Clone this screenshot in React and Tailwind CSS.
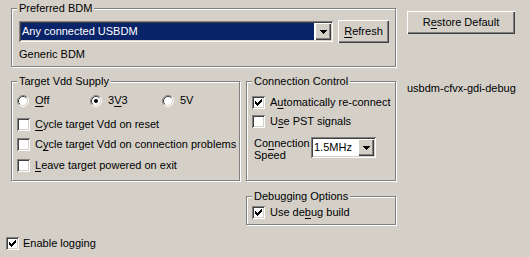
import React from "react";

const SUNKEN =
  "shadow-[inset_1px_1px_0_#808080,inset_-1px_-1px_0_#ffffff,inset_2px_2px_0_#404040,inset_-2px_-2px_0_#D4D0C8]";
const RAISED =
  "shadow-[inset_1px_1px_0_#ffffff,inset_-1px_-1px_0_#404040,inset_-2px_-2px_0_#808080]";

function U({ children }) {
  return <span className="underline underline-offset-[2px] decoration-1">{children}</span>;
}

function Group({ title, className, children }) {
  return (
    <div
      className={`relative border border-[#808080] shadow-[inset_1px_1px_0_#ffffff,1px_1px_0_#ffffff] ${className}`}
    >
      <span className="absolute left-[5px] top-[-7px] px-[2px] bg-[#D4D0C8] leading-[13px] whitespace-nowrap">
        {title}
      </span>
      {children}
    </div>
  );
}

function Check({ checked }) {
  const cols = [2, 3, 4, 3, 2, 1, 0];
  return (
    <span className={`relative block w-[13px] h-[13px] shrink-0 bg-white ${SUNKEN}`}>
      {checked && (
        <svg
          width="7"
          height="7"
          viewBox="0 0 7 7"
          className="absolute left-[3px] top-[3px]"
          shapeRendering="crispEdges"
        >
          {cols.map((y, x) => (
            <rect key={x} x={x} y={y} width="1" height="3" fill="#000" />
          ))}
        </svg>
      )}
    </span>
  );
}

function Radio({ checked }) {
  return (
    <svg width="12" height="12" viewBox="0 0 12 12" className="shrink-0 block">
      <circle cx="6" cy="6" r="5" fill="#fff" />
      <path d="M2.11 9.89 A5.5 5.5 0 0 1 9.89 2.11" fill="none" stroke="#808080" strokeWidth="1" />
      <path d="M9.89 2.11 A5.5 5.5 0 0 1 2.11 9.89" fill="none" stroke="#ffffff" strokeWidth="1" />
      <path d="M2.82 9.18 A4.5 4.5 0 0 1 9.18 2.82" fill="none" stroke="#404040" strokeWidth="1" />
      <path d="M9.18 2.82 A4.5 4.5 0 0 1 2.82 9.18" fill="none" stroke="#D4D0C8" strokeWidth="1" />
      {checked && <circle cx="6" cy="6" r="2" fill="#000" />}
    </svg>
  );
}

function Arrow() {
  return (
    <svg width="7" height="4" viewBox="0 0 7 4" shapeRendering="crispEdges" className="block">
      <rect x="0" y="0" width="7" height="1" fill="#000" />
      <rect x="1" y="1" width="5" height="1" fill="#000" />
      <rect x="2" y="2" width="3" height="1" fill="#000" />
      <rect x="3" y="3" width="1" height="1" fill="#000" />
    </svg>
  );
}

function DropBtn() {
  return (
    <div className={`w-[16px] h-full shrink-0 bg-[#D4D0C8] flex items-center justify-center ${RAISED}`}>
      <Arrow />
    </div>
  );
}

function Btn({ className, children }) {
  return (
    <div className={`flex items-center justify-center bg-[#D4D0C8] shrink-0 ${RAISED} ${className}`}>
      <span className="leading-[13px]">{children}</span>
    </div>
  );
}

function CheckRow({ checked, className = "", children }) {
  return (
    <div className={`flex items-center gap-[5px] h-[13px] ${className}`}>
      <Check checked={checked} />
      <span className="leading-[13px] whitespace-nowrap">{children}</span>
    </div>
  );
}

function RadioItem({ checked, className, children }) {
  return (
    <div className={`flex items-center gap-[6px] h-[13px] ${className}`}>
      <Radio checked={checked} />
      <span className="leading-[13px]">{children}</span>
    </div>
  );
}

export default function App() {
  return (
    <div className="w-[530px] h-[257px] bg-[#D4D0C8] text-black text-[11px] leading-[13px] font-['Liberation_Sans',Arial,sans-serif] overflow-hidden flex flex-col">
      {/* Row 1 */}
      <div className="flex items-start pt-[8px] pl-[11px]">
        <Group title="Preferred BDM" className="w-[385px] h-[59px] pt-[11px] pl-[7px]">
          <div className="flex items-center h-[23px]">
            <div className={`w-[314px] h-[21px] bg-white p-[2px] flex ${SUNKEN}`}>
              <div className="flex-1 h-full bg-[#0A246A] text-white pl-[1px] leading-[17px] mr-[1px] whitespace-nowrap">
                Any connected USBDM
              </div>
              <DropBtn />
            </div>
            <Btn className="ml-[5px] w-[51px] h-[23px]">
              <U>R</U>efresh
            </Btn>
          </div>
          <div className="mt-[5px] leading-[13px]">Generic BDM</div>
        </Group>
        <Btn className="ml-[11px] mt-[3px] w-[108px] h-[23px]">
          R<U>e</U>store Default
        </Btn>
      </div>

      {/* Row 2 */}
      <div className="flex items-start mt-[14px] pl-[11px]">
        <Group title="Target Vdd Supply" className="w-[229px] h-[100px] pl-[5px] pt-[12px]">
          <div className="flex">
            <RadioItem className="w-[73px]">
              <U>O</U>ff
            </RadioItem>
            <RadioItem checked className="w-[72px]">
              3<U>V</U>3
            </RadioItem>
            <RadioItem className="w-[60px]">5V</RadioItem>
          </div>
          <CheckRow className="mt-[11px]">
            <U>C</U>ycle target Vdd on reset
          </CheckRow>
          <CheckRow className="mt-[7px]">
            C<U>y</U>cle target Vdd on connection problems
          </CheckRow>
          <CheckRow className="mt-[8px]">
            <U>L</U>eave target powered on exit
          </CheckRow>
        </Group>

        <div className="ml-[6px] w-[150px] flex flex-col">
          <Group title="Connection Control" className="w-[150px] h-[100px] pl-[5px] pt-[14px]">
            <CheckRow checked>
              A<U>u</U>tomatically re-connect
            </CheckRow>
            <CheckRow className="mt-[6px]">
              U<U>s</U>e PST signals
            </CheckRow>
            <div className="flex items-start mt-[9px]">
              <div className="ml-[2px] w-[57px] leading-[12px]">
                Co<U>n</U>nection
                <br />
                Speed
              </div>
              <div className={`w-[65px] h-[21px] bg-white p-[2px] flex ${SUNKEN}`}>
                <div className="flex-1 h-full pl-[1px] leading-[17px] whitespace-nowrap">1.5MHz</div>
                <DropBtn />
              </div>
            </div>
          </Group>
          <Group title="Debugging Options" className="mt-[15px] w-[150px] h-[29px] pl-[5px] pt-[9px]">
            <CheckRow checked>
              Use de<U>b</U>ug build
            </CheckRow>
          </Group>
        </div>

        <div className="ml-[11px] mt-[1px] leading-[13px] whitespace-nowrap">usbdm-cfvx-gdi-debug</div>
      </div>

      {/* Row 3 */}
      <div className="mt-[12px] pl-[6px]">
        <div className="flex items-center gap-[4px] h-[13px]">
          <Check checked />
          <span className="leading-[13px]">Enable logging</span>
        </div>
      </div>
    </div>
  );
}
